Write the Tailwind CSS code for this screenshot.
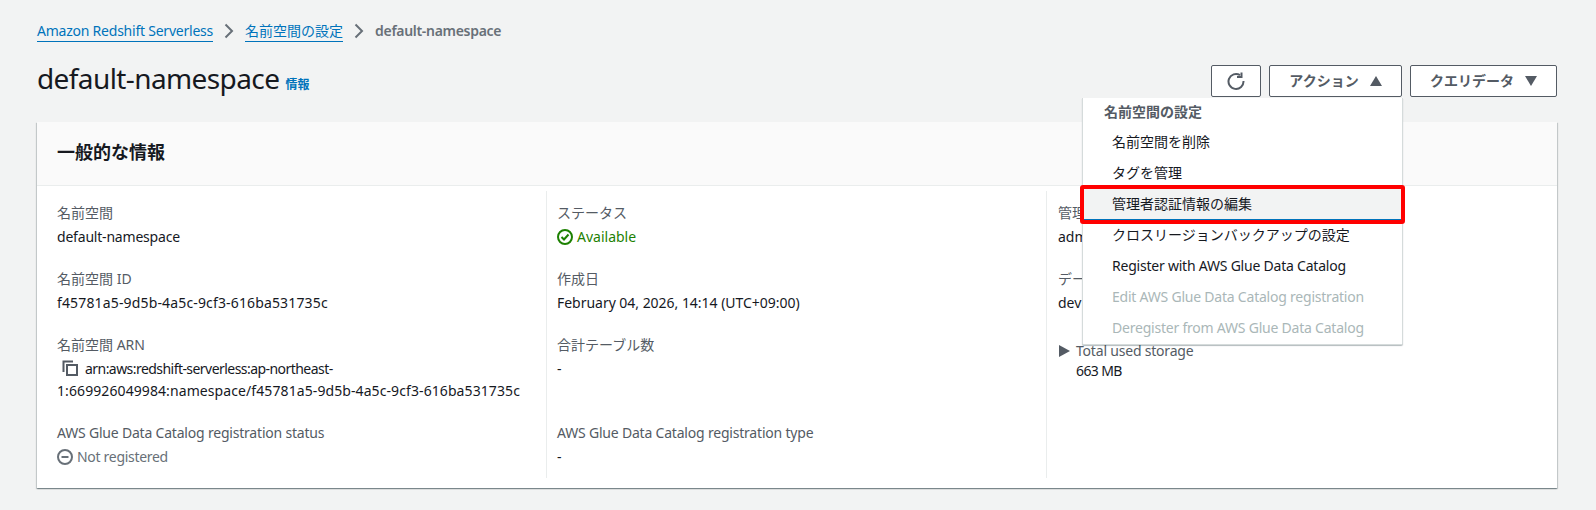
<!DOCTYPE html>
<html lang="ja"><head><meta charset="utf-8">
<script src="https://cdn.jsdelivr.net/npm/@tailwindcss/browser@4"></script>
</head>
<body class="bg-[#f2f3f3] w-[1596px] h-[510px] overflow-hidden relative font-['Noto_Sans','Noto_Sans_CJK_JP',sans-serif] text-[14px] leading-[22px] text-[#16191f]">
<div class="pl-[37px] pr-[39px] pt-[20px]">
  <nav class="flex items-center h-[22px] gap-[8px] text-[14px]">
    <a class="text-[#0073bb] border-b border-[#0073bb] leading-[20px] tracking-[-0.23px]">Amazon Redshift Serverless</a>
    <svg class="w-[16px] h-[16px]" viewBox="0 0 16 16" fill="none" stroke="#687078" stroke-width="2"><path d="M4.500 1.500 11 8 4.500 14.500"/></svg>
    <a class="text-[#0073bb] border-b border-[#0073bb] leading-[20px]">名前空間の設定</a>
    <svg class="w-[16px] h-[16px]" viewBox="0 0 16 16" fill="none" stroke="#687078" stroke-width="2"><path d="M4.500 1.500 11 8 4.500 14.500"/></svg>
    <span class="text-[#687078] font-semibold tracking-[-0.3px]">default-namespace</span>
  </nav>
  <header class="flex items-start justify-between mt-[23px] h-[34px]">
    <div class="flex items-baseline gap-[6px] -mt-[4px]">
      <h1 class="text-[28px] leading-[34px] font-normal tracking-[-0.6px]">default-namespace</h1>
      <a class="text-[#0073bb] text-[12px] font-bold leading-[16px]">情報</a>
    </div>
    <div class="flex gap-[8px]">
      <button class="w-[50px] h-[32px] bg-white border border-[#545b64] rounded-[2px] flex items-center justify-center">
        <svg class="w-[18px] h-[18px]" viewBox="0 0 18 18" fill="none" stroke="#545b64" stroke-width="2"><path d="M13 3.100A7.500 7.500 0 1 0 16.500 9"/><path d="M14.500 0.500V5H10"/></svg>
      </button>
      <button class="w-[133px] h-[32px] bg-white border border-[#545b64] rounded-[2px] flex items-center justify-center gap-[11px] font-bold text-[#545b64]">アクション
        <svg class="w-[12px] h-[10px]" viewBox="0 0 12 10" fill="#545b64"><path d="M6 0 12 10H0z"/></svg>
      </button>
      <button class="w-[147px] h-[32px] bg-white border border-[#545b64] rounded-[2px] flex items-center justify-center gap-[11px] font-bold text-[#545b64]">クエリデータ
        <svg class="w-[12px] h-[10px]" viewBox="0 0 12 10" fill="#545b64"><path d="M6 10 12 0H0z"/></svg>
      </button>
    </div>
  </header>
  <section class="mt-[23px] h-[366px] bg-white shadow-[0_1px_1px_0_rgba(0,28,36,0.3),1px_1px_1px_0_rgba(0,28,36,0.15),-1px_1px_1px_0_rgba(0,28,36,0.15)]">
    <div class="h-[64px] bg-[#fafafa] border-b border-[#eaeded] px-[20px] pb-[3px] flex items-center">
      <h2 class="text-[18px] font-bold leading-[22px]">一般的な情報</h2>
    </div>
    <div class="grid grid-cols-[509px_500px_1fr] pt-[5px]">
      <div class="pl-[20px] h-[287px] flex flex-col gap-[20px]">
        <div class="pt-[11px]"><div class="text-[#545b64]">名前空間</div><div class="mt-[2px] tracking-[-0.2px]">default-namespace</div></div>
        <div><div class="text-[#545b64]">名前空間 ID</div><div class="mt-[2px] tracking-[0.15px]">f45781a5-9d5b-4a5c-9cf3-616ba531735c</div></div>
        <div><div class="text-[#545b64]">名前空間 ARN</div>
          <div class="mt-[2px]"><svg class="inline-block w-[16px] h-[16px] ml-[5px] mr-[7px] align-[-2px]" viewBox="0 0 16 16" fill="none" stroke="#545b64" stroke-width="2"><path d="M1.500 12V1.500H11"/><path d="M5 5h10v10H5z"/></svg><span class="tracking-[-0.55px]">arn:aws:redshift-serverless:ap-northeast-</span><br><span class="tracking-[0.09px]">1:669926049984:namespace/f45781a5-9d5b-4a5c-9cf3-616ba531735c</span></div></div>
        <div><div class="text-[#545b64] tracking-[-0.2px]">AWS Glue Data Catalog registration status</div>
          <div class="flex items-center gap-[4px] text-[#687078] mt-[2px]"><svg class="w-[16px] h-[16px]" viewBox="0 0 16 16" fill="none" stroke="#687078" stroke-width="2"><circle cx="8" cy="8" r="7"/><path d="M4.500 8h7"/></svg><span class="tracking-[-0.3px]">Not registered</span></div></div>
      </div>
      <div class="pl-[10px] h-[287px] border-l border-[#eaeded] flex flex-col gap-[20px]">
        <div class="pt-[11px]"><div class="text-[#545b64]">ステータス</div>
          <div class="flex items-center gap-[4px] text-[#1d8102] mt-[2px]"><svg class="w-[16px] h-[16px]" viewBox="0 0 16 16" fill="none" stroke="#1d8102" stroke-width="2"><circle cx="8" cy="8" r="7"/><path d="M4.500 8l2.500 2.500L11.500 5.500"/></svg>Available</div></div>
        <div><div class="text-[#545b64]">作成日</div><div class="mt-[2px] tracking-[-0.03px]">February 04, 2026, 14:14 (UTC+09:00)</div></div>
        <div class="h-[68px]"><div class="text-[#545b64]">合計テーブル数</div><div class="mt-[2px]">-</div></div>
        <div><div class="text-[#545b64] tracking-[-0.2px]">AWS Glue Data Catalog registration type</div><div class="mt-[2px]">-</div></div>
      </div>
      <div class="pl-[11px] h-[287px] border-l border-[#eaeded] flex flex-col gap-[20px]">
        <div class="pt-[11px]"><div class="text-[#545b64]">管理者ユーザー名</div><div class="mt-[2px]">admin</div></div>
        <div><div class="text-[#545b64]">データベース名</div><div class="mt-[2px]">dev</div></div>
        <div class="pl-[18px] pt-[6px] relative"><svg class="absolute left-[1px] top-[11px] w-[11px] h-[12px]" viewBox="0 0 11 12" fill="#545b64"><path d="M0 0 11 6 0 12z"/></svg><div class="text-[#545b64] tracking-[-0.2px]">Total used storage</div><div class="-mt-[2px] tracking-[-0.6px]">663 MB</div></div>
      </div>
    </div>
  </section>
</div>
<div class="absolute left-[1082px] top-[98px] w-[321px] h-[247px] bg-white border-x border-b border-[#d5dbdb] rounded-b-[2px] shadow-[0_1px_1px_0_rgba(0,28,36,0.3)] pt-[3px]">
  <div class="pl-[21px] h-[22px] leading-[22px] font-bold text-[#545b64]">名前空間の設定</div>
  <ul class="mt-[3px]">
    <li class="pl-[29px] h-[31px] leading-[31px]">名前空間を削除</li>
    <li class="pl-[29px] h-[31px] leading-[31px]">タグを管理</li>
    <li class="pl-[29px] h-[31px] leading-[31px] bg-[#f2f3f3] shadow-[0_1px_0_#0073bb]">管理者認証情報の編集</li>
    <li class="pl-[29px] h-[31px] leading-[31px]">クロスリージョンバックアップの設定</li>
    <li class="pl-[29px] h-[31px] leading-[31px] tracking-[-0.22px]">Register with AWS Glue Data Catalog</li>
    <li class="pl-[29px] h-[31px] leading-[31px] tracking-[-0.22px] text-[#aab7b8]">Edit AWS Glue Data Catalog registration</li>
    <li class="pl-[29px] h-[31px] leading-[31px] tracking-[-0.22px] text-[#aab7b8]">Deregister from AWS Glue Data Catalog</li>
  </ul>
</div>
<div class="absolute left-[1080px] top-[185px] w-[325px] h-[39px] border-[4px] border-[#ff0000] rounded-[3px]"></div>
</body></html>
